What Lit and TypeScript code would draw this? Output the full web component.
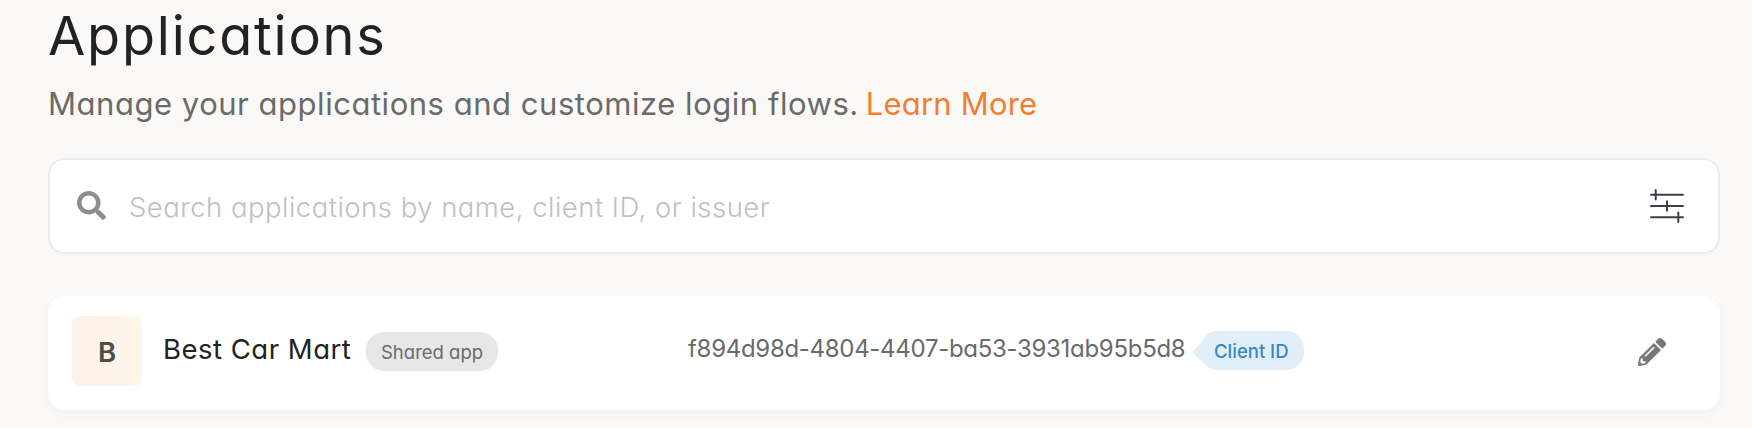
import { LitElement, html, css } from "lit";
import { customElement } from "lit/decorators.js";

@customElement("app-root")
class AppRoot extends LitElement {
  static styles = css`
    :host { display: block; height: 428px; overflow: hidden; background: #faf9f7; color: #222;
      font-family: Inter, "Open Sans", sans-serif; font-feature-settings: "cv11"; }
    * { box-sizing: border-box; }
    .page { padding: 0 32px 0 48px; display: flex; flex-direction: column; }
    h1 { margin: 0; padding-top: 1px; font-size: 54px; line-height: 70px; font-weight: 400; letter-spacing: 1.8px; white-space: nowrap; }
    .sub { margin: 0; padding-top: 10px; height: 87px; font-size: 31px; line-height: 46px; font-weight: 400; letter-spacing: .2px; color: #6a6a68; white-space: nowrap; }
    .desc { letter-spacing: .53px; margin-right: -2px; }
    .sub a { color: #f17f2f; }
    .search { height: 96px; border: 2px solid #ececec; border-radius: 16px; background: #fff; display: flex; align-items: center; padding: 0 34px 0 27px; }
    .search .glass { width: 29px; height: 29px; fill: #8e8e8e; margin-top: -1px; }
    .placeholder { flex: 1; margin-left: 23px; font-size: 27.5px; line-height: 34px; font-weight: 300; letter-spacing: .48px; color: #c0c0c0; white-space: nowrap; padding-top: 1px; }
    .sliders { width: 34px; height: 34px; stroke: #403d4a; stroke-width: 2; stroke-linecap: round; fill: none; }
    .card { margin-top: 42px; height: 114px; border-radius: 16px; background: #fff; box-shadow: 0 4px 8px rgba(0,0,0,.035);
      display: grid; grid-template-columns: 616px 1fr auto; align-items: center; padding: 0 54px 0 24px; }
    .app, .client { display: flex; align-items: center; white-space: nowrap; }
    .avatar { width: 70px; height: 70px; margin-top: -4px; border-radius: 7px; background: linear-gradient(90deg, #fdf1e8, #fef6ea); display: grid; place-items: center; font-size: 27.5px; font-weight: 600; color: #4c4c4c; padding-top: 2px; }
    .name { margin-left: 21px; font-size: 27.5px; line-height: 34px; font-weight: 400; letter-spacing: .5px; margin-top: -9px; width: 203px; }
    .pill { height: 39px; border-radius: 18px; line-height: 40px; font-size: 18.5px; }
    .shared { width: 132px; padding-left: 15px; background: #e7e7e7; color: #6a6a6a; font-weight: 400; letter-spacing: 0; margin-top: -3px; }
    .id { width: 504px; font-size: 24px; line-height: 30px; font-weight: 400; letter-spacing: -.3px; color: #6a6a6a; margin-top: -8px; }
    .tag { display: flex; margin-top: -5px; align-items: center; }
    .arrow { width: 12px; height: 20px; fill: #e0eef9; margin-right: -4px; margin-top: 2px; }
    .clientid { width: 104px; padding-left: 14px; background: #e0eef9; color: #3c86c4; font-weight: 500; }
    .pencil { width: 28px; height: 28px; fill: #777; margin-top: -2px; }
  `;
  render() {
    return html`
      <main class="page">
        <h1>Applications</h1>
        <p class="sub"><span class="desc">Manage your applications and customize login flows.</span> <a>Learn More</a></p>
        <div class="search">
          <svg class="glass" viewBox="0 0 512 512"><path d="M505 442.7L405.3 343c-4.5-4.5-10.6-7-17-7H372c27.6-35.3 44-79.7 44-128C416 93.1 322.9 0 208 0S0 93.1 0 208s93.1 208 208 208c48.3 0 92.7-16.4 128-44v16.3c0 6.4 2.5 12.5 7 17l99.7 99.7c9.4 9.4 24.6 9.4 33.9 0l28.3-28.3c9.4-9.4 9.4-24.6.1-34zM208 336c-70.7 0-128-57.2-128-128 0-70.7 57.2-128 128-128 70.7 0 128 57.2 128 128 0 70.7-57.2 128-128 128z"/></svg>
          <span class="placeholder"><span>Search applications by name, client ID, or issuer</span></span>
          <svg class="sliders" viewBox="0 0 34 34"><path d="M1 5.7H33M1 17H33M1 28.3H33M5.7 1V10.4M17 12.3V21.7M28.3 23.6V33"/></svg>
        </div>
        <section class="card">
          <div class="app">
            <div class="avatar">B</div>
            <span class="name">Best Car Mart</span>
            <span class="pill shared">Shared app</span>
          </div>
          <div class="client">
            <span class="id">f894d98d-4804-4407-ba53-3931ab95b5d8</span>
            <span class="tag"><svg class="arrow" viewBox="0 0 12 20"><path d="M0 10L9 1L12 0V20L9 19Z"/></svg><span class="pill clientid">Client ID</span></span>
          </div>
          <svg class="pencil" viewBox="0 0 512 512"><path fill-rule="evenodd" d="M497.9 142.1l-46.1 46.1c-4.7 4.7-12.3 4.7-17 0l-111-111c-4.7-4.7-4.7-12.3 0-17l46.1-46.1c18.7-18.7 49.1-18.7 67.9 0l60.1 60.1c18.8 18.7 18.8 49.1 0 67.9zM284.2 99.8L21.6 362.4.4 483.9c-2.9 16.4 11.4 30.6 27.8 27.8l121.5-21.3 262.6-262.6c4.7-4.7 4.7-12.3 0-17l-111-111c-4.8-4.7-12.4-4.7-17.1 0zM124.1 339.9c-5.5-5.5-5.5-14.3 0-19.8l154-154c5.5-5.5 14.3-5.5 19.8 0s5.5 14.3 0 19.8l-154 154c-5.5 5.5-14.3 5.5-19.8 0zM88 424h48v36.3l-64.5 11.3-31.1-31.1L51.7 376H88v48z"/></svg>
        </section>
      </main>`;
  }
}
